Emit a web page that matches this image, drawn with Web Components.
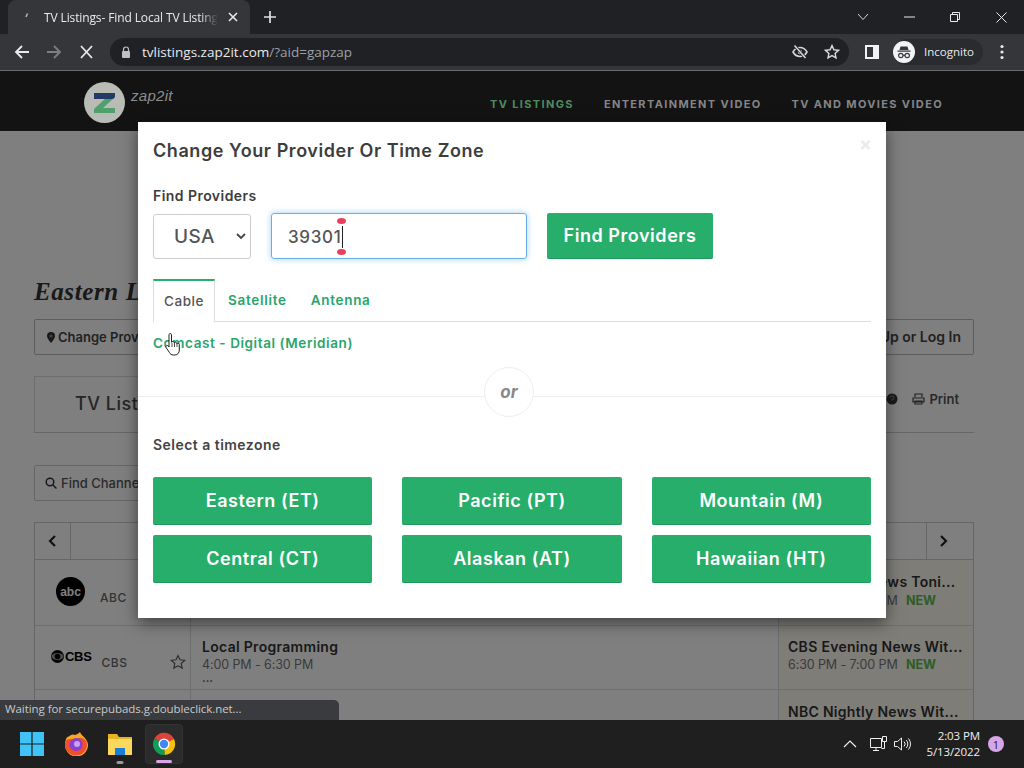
<!DOCTYPE html>
<html>
<head>
<meta charset="utf-8">
<title>TV Listings</title>
<style>
  html, body { margin: 0; height: 100%; overflow: hidden; }
  body { display: flex; flex-direction: column; width: 1024px; height: 768px; font-family: "Inter", "Liberation Sans", sans-serif; }
</style>
</head>
<body>
<browser-tabs></browser-tabs>
<browser-toolbar></browser-toolbar>
<zap-page>
  <site-header></site-header>
  <listing-page></listing-page>
  <provider-modal slot="modal"></provider-modal>
</zap-page>
<win-taskbar></win-taskbar>

<script>
const CHROME_FONT = '"Open Sans", "Liberation Sans", sans-serif'

class BrowserTabs extends HTMLElement{
    constructor(){
        super();
        const el = this.attachShadow({mode:'open'})
        el.innerHTML = `
        <style>
        :host { display: flex; height: 34px; background: #202124; color: #e8eaed; font: 12px ${CHROME_FONT}; flex: none; }
        .tab { width: 242px; box-sizing: border-box; margin-left: 8px; padding: 0 12px; display: flex; align-items: center; background: #35363a; border-radius: 8px 8px 0 0; }
        .fav { width: 16px; flex: none; }
        .title { margin-left: 8px; flex: 1; white-space: nowrap; letter-spacing: -.12px; -webkit-mask-image: linear-gradient(90deg,#000 90%,transparent); mask-image: linear-gradient(90deg,#000 90%,transparent); }
        .x { margin-left: 10px; width: 10px; height: 10px; flex: none; }
        .plus { margin: 0 0 0 14px; align-self: center; width: 12px; height: 12px; }
        .space { flex: 1; }
        .win { display: flex; align-items: center; gap: 0; }
        .win span { width: 46px; display: flex; justify-content: center; }
        </style>
        <div class="tab">
          <svg class="fav" viewBox="0 0 16 16"><path d="M7.5 4.5 6 8" stroke="#aab2c8" stroke-width="1.6" fill="none"/></svg>
          <span class="title">TV Listings- Find Local TV Listing</span>
          <svg class="x" viewBox="0 0 10 10"><path d="M1 1l8 8M9 1l-8 8" stroke="#e8eaed" stroke-width="1.6"/></svg>
        </div>
        <svg class="plus" viewBox="0 0 12 12"><path d="M6 0v12M0 6h12" stroke="#dfe1e5" stroke-width="1.7"/></svg>
        <div class="space"></div>
        <div class="win">
          <span><svg width="12" height="8" viewBox="0 0 12 8"><path d="M1 1l5 5.5L11 1" stroke="#d5d6d8" fill="none"/></svg></span>
          <span><svg width="11" height="2" viewBox="0 0 11 2"><path d="M0 1h11" stroke="#e8eaed"/></svg></span>
          <span><svg width="10" height="10" viewBox="0 0 10 10"><path d="M.5 2.5h7v7h-7zM2.5 2.5v-2h7v7h-2" stroke="#e8eaed" fill="none"/></svg></span>
          <span><svg width="11" height="11" viewBox="0 0 11 11"><path d="M.5.5l10 10M10.5.5l-10 10" stroke="#e8eaed"/></svg></span>
        </div>
        `
    }
}
customElements.define('browser-tabs', BrowserTabs)

class BrowserToolbar extends HTMLElement{
    constructor(){
        super();
        const el = this.attachShadow({mode:'open'})
        el.innerHTML = `
        <style>
        :host { display: flex; align-items: center; height: 37px; box-sizing: border-box; padding-bottom: 1px; border-bottom: 1px solid #6a6b6e; background: #35363a; color: #e8eaed; font: 13px ${CHROME_FONT}; flex: none; }
        .nav { width: 16px; height: 16px; flex: none; }
        .pill { margin-left: 16px; width: 739px; height: 28px; background: #202124; border-radius: 14px; display: flex; align-items: center; flex: none; }
        .lock { margin-left: 10px; width: 12px; height: 12px; }
        .url { margin-left: 10px; flex: 1; font-size: 13.5px; }
        .url i { font-style: normal; color: #9aa0a6; }
        .panel { margin-left: 16px; width: 14px; height: 14px; flex: none; }
        .profile { margin-left: 14px; height: 26px; width: 90px; border-radius: 13px; background: #2a2b2e; display: flex; align-items: center; flex: none; font-size: 11.5px; }
        .avatar { width: 22px; height: 22px; flex: none; margin-right: 9px; }
        .dots { margin-left: 17px; width: 4px; height: 16px; }
        </style>
        <svg class="nav" style="margin-left:14px" viewBox="0 0 16 16"><path d="M15 8H2M8 2 2 8l6 6" stroke="#e8eaed" stroke-width="1.8" fill="none"/></svg>
        <svg class="nav" style="margin-left:16px" viewBox="0 0 16 16"><path d="M1 8h13M8 2l6 6-6 6" stroke="#7d7f83" stroke-width="1.8" fill="none"/></svg>
        <svg class="nav" style="margin-left:16px" viewBox="0 0 16 16"><path d="M3 2l11 12M14 2 3 14" stroke="#e8eaed" stroke-width="1.8"/></svg>
        <div class="pill">
          <svg class="lock" viewBox="0 0 12 12"><path d="M3.5 5V3.5a2.5 2.5 0 0 1 5 0V5" stroke="#bdc1c6" stroke-width="1.2" fill="none"/><rect x="2" y="5" width="8" height="7" rx="1" fill="#bdc1c6"/></svg>
          <span class="url">tvlistings.zap2it.com<i>/?aid=gapzap</i></span>
          <svg width="16" height="16" viewBox="0 0 16 16" style="margin-right:16px"><path d="M1 8s2.6-4.5 7-4.5S15 8 15 8s-2.6 4.5-7 4.5S1 8 1 8z" fill="none" stroke="#d4d6d9" stroke-width="1.6"/><circle cx="8" cy="8" r="2.2" fill="#d4d6d9"/><path d="M3 2l10.5 12" stroke="#202124" stroke-width="3"/><path d="M2.5 1.5l11 12.5" stroke="#d4d6d9" stroke-width="1.6"/></svg>
          <svg width="16" height="16" viewBox="0 0 16 16" style="margin-right:9px"><path d="M8 1.6l1.9 4.2 4.6.5-3.4 3.1.9 4.5L8 11.6l-4 2.3.9-4.5L1.5 6.3l4.6-.5z" fill="none" stroke="#d8dadd" stroke-width="1.4"/></svg>
        </div>
        <svg class="panel" viewBox="0 0 14 14"><path d="M0 0h14v14H0z" fill="#f1f3f4"/><path d="M2 2h6v10H2z" fill="#35363a"/></svg>
        <div class="profile">
          <svg class="avatar" viewBox="0 0 22 22"><circle cx="11" cy="11" r="11" fill="#f1f3f4"/><path d="M7.5 5.5h7l1 3.500H6.500zM4.500 9.600h13v1.200h-13z" fill="#35363a"/><circle cx="7.800" cy="14.500" r="2.200" fill="none" stroke="#35363a" stroke-width="1.200"/><circle cx="14.200" cy="14.500" r="2.200" fill="none" stroke="#35363a" stroke-width="1.200"/><path d="M10 14.300h2" stroke="#35363a"/></svg>
          Incognito
        </div>
        <svg class="dots" viewBox="0 0 4 16"><circle cx="2" cy="2.500" r="1.600" fill="#e8eaed"/><circle cx="2" cy="8" r="1.600" fill="#e8eaed"/><circle cx="2" cy="13.500" r="1.600" fill="#e8eaed"/></svg>
        `
    }
}
customElements.define('browser-toolbar', BrowserToolbar)

class ZapPage extends HTMLElement{
    constructor(){
        super();
        const el = this.attachShadow({mode:'open'})
        el.innerHTML = `
        <style>
        :host { display: block; position: relative; flex: 1; min-height: 0; overflow: hidden; background: #fff; }
        .backdrop { position: absolute; inset: 0; background: rgba(0,0,0,.5); }
        .modal { position: absolute; left: 138px; top: 51px; display: block; z-index: 2; }
        .status { position: absolute; z-index: 3; left: 0; bottom: 0; width: 339px; height: 20px; box-sizing: border-box; padding: 1px 0 0 5px; background: #3a3b3e; border-radius: 0 5px 0 0; color: #c8cacc; font: 11.5px ${CHROME_FONT}; letter-spacing: -.07px; white-space: nowrap; }
        .hand { position: absolute; z-index: 3; left: 165px; top: 261px; }
        </style>
        <slot></slot>
        <div class="backdrop"></div>
        <div class="modal"><slot name="modal"></slot></div>
        <svg class="hand" width="17" height="25" viewBox="0 0 17 25"><path d="M4.500 1.700c1-.7 2 0 2 1v7.500c0-1 2.700-1 2.700.3v.5c0-1 2.600-1 2.600.4v.6c0-1 2.500-1 2.500.5v5.500c0 2.500-1.500 5-4.500 5H8.300c-2 0-3-1-4-2.700L1 15.500c-.7-1.400 1-2.700 2.200-1.500l.8 1V2.700c0-.4.200-.8.500-1z" fill="#fff" stroke="#222" stroke-width="1"/><path d="M7 11v4M9.500 11v4M12 12v3" stroke="#222" stroke-width=".8"/></svg>
        <div class="status">Waiting for securepubads.g.doubleclick.net...</div>
        `
    }
}
customElements.define('zap-page', ZapPage)

class SiteHeader extends HTMLElement{
    constructor(){
        super();
        const el = this.attachShadow({mode:'open'})
        el.innerHTML = `
        <style>
        /* sits above the backdrop, colours are the dimmed ones */
        :host { display: flex; position: relative; z-index: 1; align-items: flex-start; height: 60px; background: #131314; padding-left: 84px; box-sizing: border-box; }
        .logo { width: 41px; height: 41px; margin-top: 11px; flex: none; }
        .name { margin: 16px 0 0 6px; color: #8d8d8d; font: italic 15px "Liberation Sans", sans-serif; letter-spacing: .3px; }
        nav { display: flex; gap: 30px; margin: 26px 0 0 auto; padding-right: 81px; font: 700 11px "Inter", sans-serif; letter-spacing: 1.35px; color: #858585; white-space: nowrap; }
        nav .on { color: #4f8a5f; }
        </style>
        <svg class="logo" viewBox="0 0 41 41"><circle cx="20.500" cy="20.500" r="20.500" fill="#b9bcb5"/><path d="M10 11h21v4L19 26h12v5H10v-4l12-11H10z" fill="#4f9f6f"/><path d="M10 11h21v4l-2 2H10z" fill="#243a66"/></svg>
        <div class="name">zap2it</div>
        <nav><span class="on">TV LISTINGS</span><span>ENTERTAINMENT VIDEO</span><span>TV AND MOVIES VIDEO</span></nav>
        `
    }
}
customElements.define('site-header', SiteHeader)

class ListingPage extends HTMLElement{
    constructor(){
        super();
        const el = this.attachShadow({mode:'open'})
        el.innerHTML = `
        <style>
        :host { display: block; padding: 144px 50px 0 34px; font-family: "Inter", sans-serif; color: #4d4d4d; }
        h1 { margin: 0 0 11px; height: 33px; font: italic 700 25px/33px "Liberation Serif", serif; color: #333; letter-spacing: .6px; white-space: nowrap; }
        .bar { display: flex; justify-content: space-between; }
        .btn { height: 36px; box-sizing: border-box; border: 1px solid #bbb; border-radius: 2px; display: flex; align-items: center; padding: 0 12px; gap: 3px; font-size: 13px; font-weight: 600; color: #444; white-space: nowrap; }
        .tabs { display: flex; justify-content: space-between; align-items: flex-start; margin-top: 21px; height: 57px; box-sizing: border-box; border-bottom: 1px solid #ccc; }
        .tab { height: 56px; width: 140px; box-sizing: border-box; padding: 16px 0 0 40px; border: 1px solid #ddd; border-bottom: 0; font-size: 18px; font-weight: 500; letter-spacing: .5px; white-space: nowrap; }
        .tools { display: flex; align-items: center; gap: 14px; padding: 15px 15px 0 0; font-size: 13px; font-weight: 600; color: #555; }
        .tools span { display: flex; align-items: center; gap: 4px; }
        .find { width: 300px; margin-top: 32px; padding-left: 10px; gap: 4px; border-color: #ccc; font-weight: 500; color: #555; }
        .grid { margin-top: 21px; border: 1px solid #ccc; border-width: 1px 1px 0 1px; display: grid; grid-template-columns: 156px 1fr 195px; grid-template-rows: 37px 66px 64px 64px; }
        .head { grid-column: 1 / -1; display: flex; justify-content: space-between; border-bottom: 1px solid #ccc; }
        .arrow { width: 35px; display: flex; align-items: center; justify-content: center; border-right: 1px solid #ccc; }
        .arrow.r { width: 47px; box-sizing: border-box; padding-right: 14px; border-right: 0; border-left: 1px solid #ccc; }
        .ch { position: relative; display: flex; align-items: center; padding-left: 16px; gap: 11px; border-bottom: 1px solid #ddd; border-right: 1px solid #ddd; box-sizing: border-box; }
        .ch small { font-size: 12px; font-weight: 500; color: #666; padding-top: 10px; letter-spacing: .5px; }
        .abc { width: 29px; height: 29px; border-radius: 50%; background: #000; color: #fff; display: flex; align-items: center; justify-content: center; font: 700 12px "Liberation Sans", sans-serif; margin: -2px 4px 0 5px; }
        .cbs { font: 700 13px "Liberation Sans", sans-serif; color: #000; display: flex; align-items: center; gap: 1px; margin: -2px -1px 0 0; letter-spacing: -.3px; }
        .star { position: absolute; right: 4px; bottom: 19px; }
        .cell { padding: 12px 0 0 11px; border-bottom: 1px solid #ddd; box-sizing: border-box; white-space: nowrap; overflow: hidden; }
        .cell.now { background: #fdfaee; border-left: 1px solid #ddd; padding-left: 9px; }
        .cell.first { padding-top: 13px; }
        .cell b { display: block; font-size: 14px; font-weight: 600; color: #333; letter-spacing: .3px; }
        .cell p { margin: 2px 0 0; font-size: 12.500px; color: #777; letter-spacing: -.1px; }
        .cell em { font-style: normal; font-weight: 700; color: #5fb94e; margin-left: 5px; }
        .more { font-size: 11px; line-height: 12px; font-weight: 700; color: #555; }
        </style>
        <h1>Eastern L</h1>
        <div class="bar">
          <div class="btn"><svg width="8" height="11" viewBox="0 0 8 11"><path d="M4 0a4 4 0 0 1 4 4c0 2.500-4 7-4 7S0 6.500 0 4a4 4 0 0 1 4-4z" fill="#333"/><circle cx="4" cy="4" r="1.500" fill="#888"/></svg>Change Provider</div>
          <div class="btn" style="font-size:14px;padding-bottom:1px">Sign Up or Log In</div>
        </div>
        <div class="tabs">
          <div class="tab">TV Listings</div>
          <div class="tools">
            <svg width="12" height="12" viewBox="0 0 12 12"><circle cx="6" cy="6" r="5.500" fill="#333"/><path d="M4.300 4.800a1.800 1.800 0 1 1 2.400 1.600c-.5.2-.7.500-.7 1" stroke="#888" stroke-width="1.100" fill="none"/></svg>
            <span><svg width="13" height="12" viewBox="0 0 13 12"><path d="M3 4V1h7v3M1 5h11v4H1zM3 8h7v3H3z" fill="none" stroke="#444" stroke-width="1.200"/></svg>Print</span>
          </div>
        </div>
        <div class="btn find"><svg width="12" height="12" viewBox="0 0 12 12"><circle cx="5" cy="5" r="3.800" fill="none" stroke="#333" stroke-width="1.500"/><path d="M8 8l3.500 3.500" stroke="#333" stroke-width="1.500"/></svg>Find Channels</div>
        <div class="grid">
          <div class="head">
            <div class="arrow"><svg width="9" height="12" viewBox="0 0 9 12"><path d="M7 1 2 6l5 5" stroke="#222" stroke-width="2.200" fill="none"/></svg></div>
            <div class="arrow r"><svg width="9" height="12" viewBox="0 0 9 12"><path d="M2 1l5 5-5 5" stroke="#222" stroke-width="2.200" fill="none"/></svg></div>
          </div>
          <div class="ch"><div class="abc">abc</div><small>ABC</small></div>
          <div class="cell"></div>
          <div class="cell now first"><b>ABC World News Toni...</b><p style="margin-top:3px">6:30 PM - 7:00 PM <em>NEW</em></p></div>
          <div class="ch"><div class="cbs"><svg width="13" height="13" viewBox="0 0 13 13"><circle cx="6.500" cy="6.500" r="6.500" fill="#000"/><ellipse cx="6.500" cy="6.500" rx="6" ry="3.400" fill="#999"/><circle cx="6.500" cy="6.500" r="2.800" fill="#000"/></svg>CBS</div><small style="padding-top:10px">CBS</small>
            <svg class="star" width="16" height="16" viewBox="0 0 16 16"><path d="M8 1.500l2 4.300 4.700.5-3.500 3.200 1 4.600L8 11.800l-4.200 2.300 1-4.600L1.300 6.300 6 5.800z" fill="none" stroke="#555" stroke-width="1.100"/></svg>
          </div>
          <div class="cell"><b>Local Programming</b><p>4:00 PM - 6:30 PM</p><div class="more">...</div></div>
          <div class="cell now"><b>CBS Evening News Wit...</b><p>6:30 PM - 7:00 PM <em>NEW</em></p></div>
          <div class="ch"></div>
          <div class="cell"></div>
          <div class="cell now first"><b>NBC Nightly News Wit...</b></div>
        </div>
        `
    }
}
customElements.define('listing-page', ListingPage)

class GreenButton extends HTMLElement{
    constructor(){
        super();
        const el = this.attachShadow({mode:'open'})
        el.innerHTML = `
        <style>
        :host { display: flex; align-items: center; justify-content: center; height: 48px; box-sizing: border-box; background: #27ae6b; border-bottom: 1px solid #1f9a5c; border-radius: 2px; color: #fff; font-weight: 600; font-size: 18px; letter-spacing: .55px; white-space: nowrap; }
        </style>
        <slot></slot>
        `
    }
}
customElements.define('green-button', GreenButton)

class ProviderModal extends HTMLElement{
    constructor(){
        super();
        const el = this.attachShadow({mode:'open'})
        el.innerHTML = `
        <style>
        :host { display: block; position: relative; width: 748px; height: 496px; box-sizing: border-box; padding: 18px 15px 0; background: #fff; box-shadow: 0 5px 15px rgba(0,0,0,.5); font-family: "Inter", sans-serif; color: #3d3d3d; }
        h2 { margin: 0; font-size: 18px; line-height: 22px; font-weight: 600; letter-spacing: .57px; white-space: nowrap; }
        .close { position: absolute; right: 14px; top: 12px; font-size: 19px; font-weight: 700; color: #ececec; line-height: 22px; }
        label { display: block; margin-top: 25px; font-size: 14px; line-height: 18px; font-weight: 600; letter-spacing: .45px; }
        .form { display: flex; margin-top: 8px; align-items: stretch; height: 46px; }
        .select { width: 98px; box-sizing: border-box; margin-top: 1px; padding-left: 20px; border: 1px solid #ccc; border-radius: 3px; display: flex; align-items: center; font-size: 19px; font-weight: 500; color: #555; letter-spacing: .4px; }
        .select svg { margin-left: 21px; }
        .input { position: relative; width: 256px; margin-left: 20px; box-sizing: border-box; padding: 1px 0 0 16px; border: 1px solid #66afe9; border-radius: 3px; box-shadow: 0 0 6px rgba(102,175,233,.6); display: flex; align-items: center; font-size: 17px; font-weight: 500; color: #555; letter-spacing: .7px; }
        .caret { width: 1px; height: 22px; background: #222; }
        .pin { position: absolute; left: 65px; width: 9px; height: 6px; background: #e8405a; border-radius: 50%; }
        .find { margin-left: 20px; width: 166px; height: 46px; }
        .tabs { display: flex; align-items: flex-end; margin-top: 20px; height: 43px; box-sizing: border-box; border-bottom: 1px solid #ddd; }
        .tabs div { height: 42px; box-sizing: border-box; padding-top: 13px; font-size: 13.500px; font-weight: 600; color: #2aa56c; letter-spacing: .7px; margin-right: 24px; }
        .tabs .on { width: 62px; margin: 0 13px 0 0; padding: 12px 0 0 10px; height: 43px; margin-bottom: -1px; background: #fff; border: 1px solid #ddd; border-top: 2px solid #27ae6b; border-bottom: 0; color: #555; font-weight: 500; letter-spacing: .55px; }
        .link { margin-top: 13px; height: 17px; font-size: 13.500px; line-height: 17px; font-weight: 600; color: #2aa56c; letter-spacing: .58px; white-space: nowrap; }
        .or { position: relative; margin: 44px -15px 0; border-top: 1px solid #eee; height: 0; }
        .or span { position: absolute; left: 346px; top: -30px; width: 50px; height: 50px; box-sizing: border-box; border: 1px solid #eee; border-radius: 50%; background: #fff; display: flex; align-items: center; justify-content: center; font-style: italic; font-weight: 700; font-size: 17px; color: #888; }
        h3 { margin: 39px 0 0; font-size: 14px; line-height: 18px; font-weight: 600; color: #444; letter-spacing: .47px; }
        .zones { display: grid; grid-template-columns: repeat(3, 1fr); gap: 10px 30px; margin-top: 23px; }
        </style>
        <h2>Change Your Provider Or Time Zone</h2>
        <div class="close">×</div>
        <label>Find Providers</label>
        <div class="form">
          <div class="select">USA<svg width="10" height="7" viewBox="0 0 10 7"><path d="M1 1l4 4 4-4" stroke="#444" stroke-width="1.800" fill="none"/></svg></div>
          <div class="input">39301<span class="caret"></span><i class="pin" style="top:4px"></i><i class="pin" style="bottom:3px"></i></div>
          <green-button class="find">Find Providers</green-button>
        </div>
        <div class="tabs"><div class="on">Cable</div><div>Satellite</div><div>Antenna</div></div>
        <div class="link">Comcast - Digital (Meridian)</div>
        <div class="or"><span>or</span></div>
        <h3>Select a timezone</h3>
        <div class="zones">
          <green-button>Eastern (ET)</green-button>
          <green-button>Pacific (PT)</green-button>
          <green-button>Mountain (M)</green-button>
          <green-button>Central (CT)</green-button>
          <green-button>Alaskan (AT)</green-button>
          <green-button>Hawaiian (HT)</green-button>
        </div>
        `
    }
}
customElements.define('provider-modal', ProviderModal)

class WinTaskbar extends HTMLElement{
    constructor(){
        super();
        const el = this.attachShadow({mode:'open'})
        el.innerHTML = `
        <style>
        :host { display: flex; align-items: center; height: 48px; background: #1f1f1f; color: #f0f0f0; font: 11.5px ${CHROME_FONT}; flex: none; position: relative; z-index: 4; }
        .apps { display: flex; align-items: center; margin-left: 10px; }
        .app { position: relative; width: 44px; height: 40px; display: flex; align-items: center; justify-content: center; border-radius: 4px; box-sizing: border-box; }
        .app.open { width: 38px; margin-left: 3px; background: #2b2b2b; border: 1px solid #333; }
        .mark { position: absolute; bottom: 0; left: 50%; height: 3px; border-radius: 2px; transform: translateX(-50%); }
        .tray { margin-left: auto; display: flex; align-items: center; }
        .clock { margin-left: 15px; text-align: right; line-height: 16px; letter-spacing: -.1px; }
        .badge { margin: 0 20px 0 8px; width: 16px; height: 16px; border-radius: 50%; background: #d7a6e8; color: #222; font-size: 11px; display: flex; align-items: center; justify-content: center; }
        </style>
        <div class="apps">
          <div class="app"><svg width="24" height="24" viewBox="0 0 24 24"><path d="M0 0h11.400v11.400H0zM12.600 0H24v11.400H12.600zM0 12.600h11.400V24H0zM12.600 12.600H24V24H12.600z" fill="#3fc4f5"/></svg></div>
          <div class="app"><svg width="24" height="24" viewBox="0 0 24 24"><path d="M2 7C3 5 4 4.500 5 4.500 6 3 9 1.500 11 3c3-1 4-2 5-3 .5 2 2 3 4 5 3 3 4 6 4 8a11.500 11.500 0 0 1-23 0c0-2 .3-4 1-6z" fill="#f9a825"/><path d="M1 12a11 11 0 0 0 22 1c0-4-2-6-5-7-4-1-5 2-11 1-3 0-6 1-6 5z" fill="#ee4f2e"/><circle cx="12" cy="12.500" r="6.500" fill="#8a3fd1"/><circle cx="13" cy="12" r="3" fill="#c9a2f2"/></svg></div>
          <div class="app"><svg width="24" height="22" viewBox="0 0 24 22"><path d="M0 1h9l2 3h13v4H0z" fill="#e6b422"/><path d="M0 6h24v16H0z" fill="#fbd75b"/><path d="M7 15h10v7H7z" fill="#1a7fd6"/></svg><i class="mark" style="width:7px;background:#9a9a9a"></i></div>
          <div class="app open"><svg width="24" height="24" viewBox="0 0 24 24"><path d="M12 12 2.500 6.500A11 11 0 0 1 22 7z" fill="#db4437"/><path d="M12 12 22 7a11 11 0 0 1-9.500 16z" fill="#f4c20d"/><path d="M12 12l.5 11A11 11 0 0 1 2.500 6.500z" fill="#0f9d58"/><circle cx="12" cy="12" r="5.500" fill="#fff"/><circle cx="12" cy="12" r="4.200" fill="#4285f4"/></svg><i class="mark" style="width:16px;background:#d7a6e8"></i></div>
        </div>
        <div class="tray">
          <svg width="14" height="8" viewBox="0 0 14 8" style="margin-right:13px"><path d="M1 7l6-6 6 6" stroke="#eee" fill="none" stroke-width="1.200"/></svg>
          <svg width="17" height="16" viewBox="0 0 17 16" style="margin-right:7px"><path d="M.5 2.500h11v9H.5zM6 11.500v3M3 14.500h6" stroke="#eee" fill="none"/><path d="M12.500.5h4v5h-4zM14.500 5.500v7h-3" stroke="#eee" fill="none"/></svg>
          <svg width="17" height="14" viewBox="0 0 17 14"><path d="M.5 4.500h3l4-3.500v12l-4-3.500h-3z" stroke="#eee" fill="none"/><path d="M10 4.500a3.500 3.500 0 0 1 0 5M12.300 3a6 6 0 0 1 0 8M14.500 1.500a8.500 8.500 0 0 1 0 11" stroke="#eee" fill="none"/></svg>
          <div class="clock">2:03 PM<br>5/13/2022</div>
          <div class="badge">1</div>
        </div>
        `
    }
}
customElements.define('win-taskbar', WinTaskbar)
</script>
</body>
</html>
